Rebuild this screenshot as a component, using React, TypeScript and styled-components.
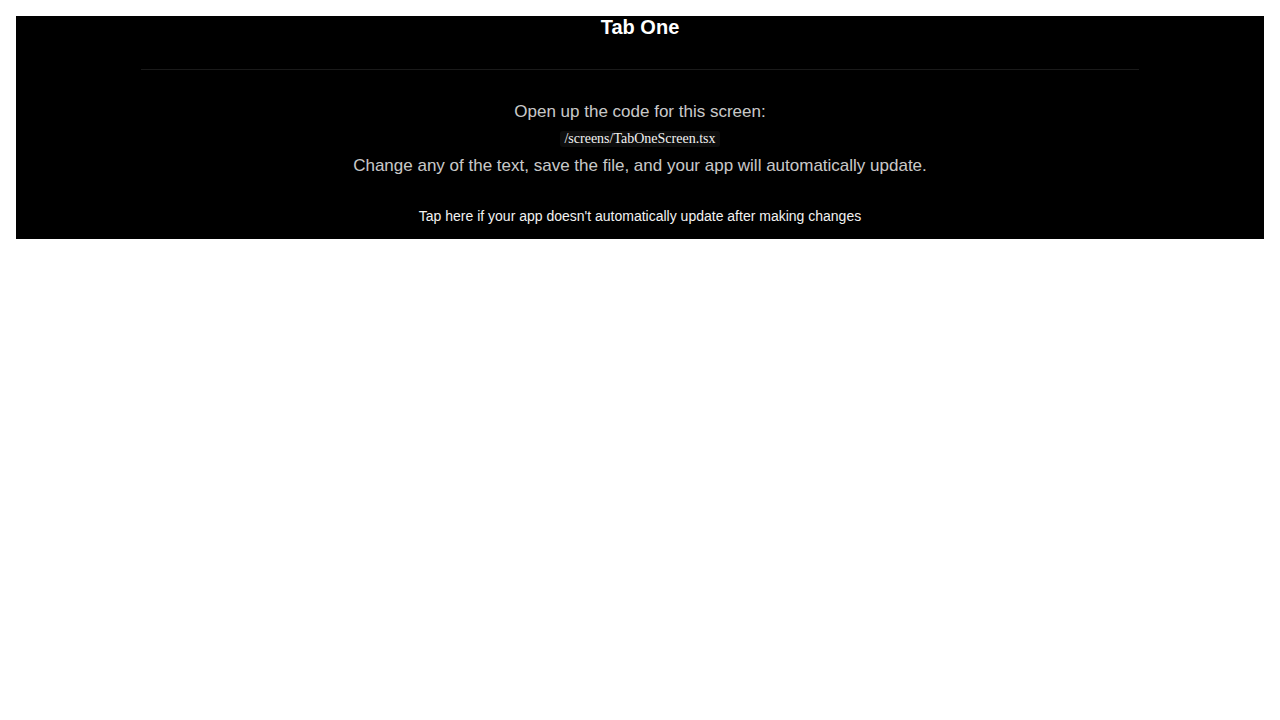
import React from 'react';
import styled, { createGlobalStyle } from 'styled-components';

const GlobalStyle = createGlobalStyle`
  html, body {
    margin: 0;
    padding: 0;
    background: #fff;
  }
  body {
    font-family: 'Liberation Sans', Arial, sans-serif;
  }
`;

const Page = styled.div`
  padding: 16px;
`;

const Screen = styled.div`
  background: #000;
  display: flex;
  flex-direction: column;
  align-items: center;
`;

const Title = styled.h1`
  margin: 0;
  font-size: 20px;
  line-height: 23px;
  font-weight: bold;
  color: #fff;
`;

const Separator = styled.div`
  margin: 30px 0;
  height: 1px;
  width: 80%;
  background: rgba(255, 255, 255, 0.1);
`;

const GetStarted = styled.div`
  display: flex;
  flex-direction: column;
  align-items: center;
  margin: 0 50px;
`;

const GetStartedText = styled.div`
  font-size: 17px;
  line-height: 24px;
  text-align: center;
  color: rgba(255, 255, 255, 0.8);
`;

const CodeHighlight = styled.div`
  margin: 7px 0;
  padding: 0 4px;
  border-radius: 3px;
  background: rgba(255, 255, 255, 0.05);
  color: #f2f2f2;
  font-family: 'Liberation Serif', 'Times New Roman', serif;
  font-size: 14px;
  line-height: 16px;
`;

const HelpContainer = styled.div`
  margin: 15px 20px 0;
  display: flex;
  align-items: center;
`;

const HelpLink = styled.a`
  padding: 15px 0;
  font-size: 14px;
  line-height: 16px;
  color: #f2f2f2;
  text-align: center;
  text-decoration: none;
  cursor: pointer;
`;

export default function App() {
  return (
    <>
      <GlobalStyle />
      <Page>
        <Screen>
          <Title>Tab One</Title>
          <Separator />
          <GetStarted>
            <GetStartedText>Open up the code for this screen:</GetStartedText>
            <CodeHighlight>/screens/TabOneScreen.tsx</CodeHighlight>
            <GetStartedText>
              Change any of the text, save the file, and your app will automatically update.
            </GetStartedText>
          </GetStarted>
          <HelpContainer>
            <HelpLink>Tap here if your app doesn't automatically update after making changes</HelpLink>
          </HelpContainer>
        </Screen>
      </Page>
    </>
  );
}
